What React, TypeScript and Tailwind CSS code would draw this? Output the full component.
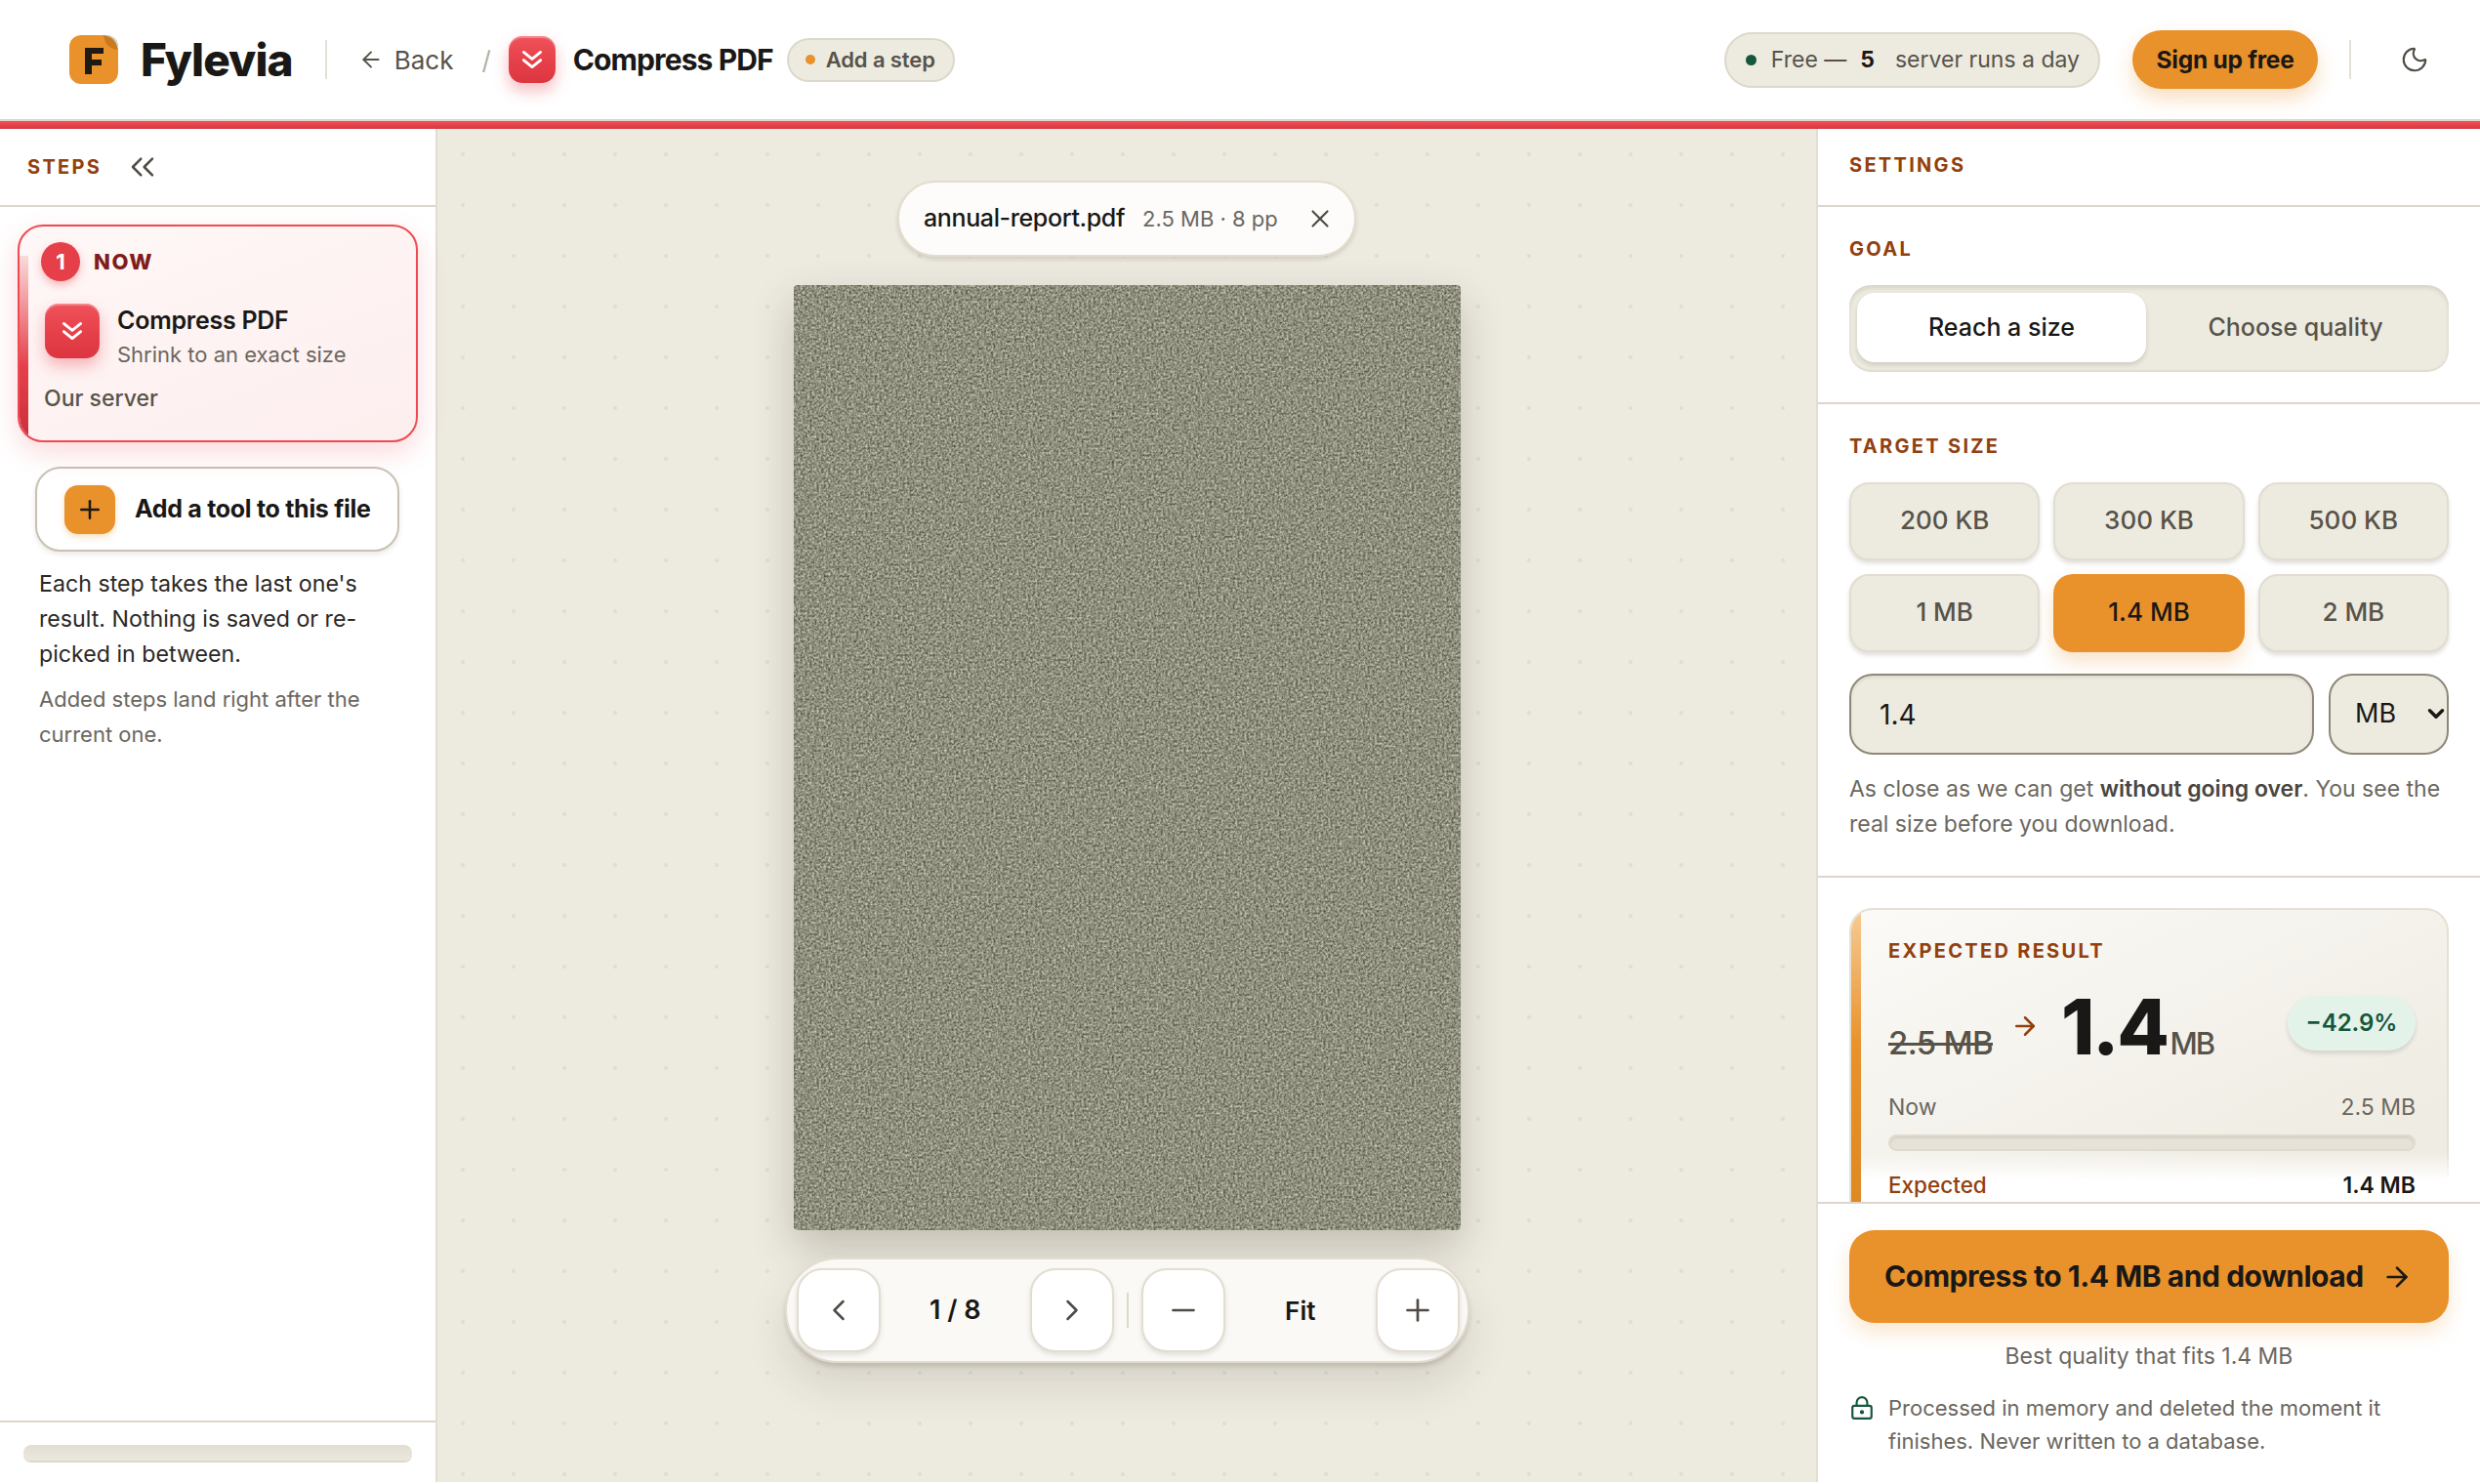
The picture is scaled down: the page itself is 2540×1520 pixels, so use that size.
import {
  ArrowLeft,
  ArrowRight,
  ChevronDown,
  ChevronLeft,
  ChevronRight,
  ChevronsLeft,
  LockKeyhole,
  Minus,
  Moon,
  Plus,
  X,
} from "lucide-react";

const SIZES = ["200 KB", "300 KB", "500 KB", "1 MB", "1.4 MB", "2 MB"];

function Label({ children }: { children: React.ReactNode }) {
  return <div className="text-[20px] leading-[24px] font-bold tracking-[0.115em] text-[#92400e]">{children}</div>;
}

function DoubleChevron({ size }: { size: number }) {
  return (
    <svg width={size} height={size} viewBox="0 0 24 24" fill="none" stroke="white" strokeWidth="2.6" strokeLinecap="round" strokeLinejoin="round">
      <path d="M4 5l8 6.5L20 5" />
      <path d="M4 12.5l8 6.5 8-6.5" />
    </svg>
  );
}

function RedIcon({ w, h, icon }: { w: string; h: string; icon: number }) {
  return (
    <div className={`${w} ${h} shrink-0 rounded-[14px] flex items-center justify-center bg-[linear-gradient(180deg,#f0525a_0%,#e5404a_55%,#dd3540_100%)] shadow-[0_8px_16px_rgba(229,64,74,0.35),inset_0_2px_1px_rgba(255,255,255,0.3)]`}>
      <DoubleChevron size={icon} />
    </div>
  );
}

function ToolButton({ children }: { children: React.ReactNode }) {
  return (
    <button className="w-[86px] h-[86px] shrink-0 rounded-[26px] bg-white border-2 border-[#e2ddcf] shadow-[0_3px_5px_rgba(60,50,30,0.12)] flex items-center justify-center text-[#4f4b44]">
      {children}
    </button>
  );
}

function Header() {
  return (
    <header className="h-[124px] shrink-0 bg-white border-b-2 border-[#ddd6c9] flex items-center pl-[71px] pr-[52px]">
      <div className="relative w-[50px] h-[50px] shrink-0 rounded-[12px] bg-[#e9912a] overflow-hidden flex items-center justify-center">
        <svg width="50" height="50" viewBox="0 0 50 50" className="absolute inset-0">
          <path d="M35 0h15v15z" fill="#cfd2cc" />
          <path d="M35 0c1 9 6 14 15 15-1-2-1-4-2-6-2-5-6-8-13-9z" fill="#c97a1e" />
          <path d="M16 13h19v6H23v6h10v6H23v9h-7z" fill="#1f1a14" />
        </svg>
      </div>
      <div className="ml-[23px] text-[46px] leading-none font-extrabold tracking-[-0.02em] text-[#1a1816]">Fylevia</div>
      <div className="ml-[33px] w-[2px] h-[40px] bg-[#e5e0d5]" />
      <ArrowLeft size={26} strokeWidth={1.8} className="ml-[32px] text-[#57534a]" />
      <span className="ml-[11px] text-[26px] text-[#57534a]">Back</span>
      <span className="ml-[29px] text-[26px] text-[#b5b0a3]">/</span>
      <div className="ml-[18px]">
        <RedIcon w="w-[48px]" h="h-[48px]" icon={26} />
      </div>
      <span className="ml-[18px] text-[30px] font-bold tracking-[-0.03em] text-[#1a1816]">Compress PDF</span>
      <div className="ml-[14px] h-[45px] rounded-full bg-[#edeae0] border-2 border-[#ddd8ca] flex items-center pl-[17px] pr-[18px] gap-[11px]">
        <span className="w-[10px] h-[10px] rounded-full bg-[#e9912a]" />
        <span className="text-[22px] font-semibold tracking-[-0.005em] text-[#57534a]">Add a step</span>
      </div>
      <div className="ml-auto h-[57px] rounded-full bg-[#edeae0] border-2 border-[#ddd8ca] flex items-center pl-[20px] pr-[19px]">
        <span className="w-[11px] h-[11px] rounded-full bg-[#14573c]" />
        <span className="ml-[15px] text-[23px] text-[#57534a]">Free —</span>
        <span className="ml-[14px] text-[23px] font-bold text-[#1a1816]">5</span>
        <span className="ml-[21px] text-[23px] text-[#57534a]">server runs a day</span>
      </div>
      <button className="ml-[33px] w-[190px] h-[60px] rounded-full bg-[#e9912a] text-[24.5px] font-bold tracking-[-0.01em] text-[#1a1816] shadow-[0_10px_20px_rgba(233,145,42,0.3)]">
        Sign up free
      </button>
      <div className="ml-[32px] w-[2px] h-[40px] bg-[#e5e0d5]" />
      <Moon size={30} strokeWidth={1.7} className="ml-[50px] text-[#4f4b44]" />
    </header>
  );
}

function StepsPanel() {
  return (
    <aside className="w-[448px] shrink-0 bg-white border-r-2 border-[#e2ddcf] flex flex-col">
      <div className="h-[80px] shrink-0 border-b-2 border-[#ddd6c9] flex items-center pl-[28px]">
        <Label>STEPS</Label>
        <ChevronsLeft size={40} strokeWidth={1.5} className="ml-[22px] text-[#4f4b44]" />
      </div>
      <div className="flex-1 px-[18px] pt-[18px]">
        <div className="relative h-[223px] rounded-[26px] border-2 border-[#ef4a52] bg-[linear-gradient(160deg,#fff7f7,#fdeeee)] overflow-hidden shadow-[0_10px_28px_rgba(229,64,74,0.2)]">
          <div className="absolute left-0 top-[30px] bottom-0 w-[9px] bg-[linear-gradient(180deg,#fbdada_0%,#e5404a_60%,#c9303a_100%)]" />
          <div className="pl-[22px] pt-[16px]">
            <div className="flex items-center">
              <div className="w-[40px] h-[40px] rounded-full bg-[#e5404a] text-white text-[22px] font-bold flex items-center justify-center shadow-[0_4px_8px_rgba(229,64,74,0.35)]">1</div>
              <span className="ml-[14px] text-[22px] font-extrabold tracking-[0.07em] text-[#7f1d1d]">NOW</span>
            </div>
            <div className="flex mt-[23px] pl-[4px]">
              <RedIcon w="w-[56px]" h="h-[56px]" icon={26} />
              <div className="ml-[18px]">
                <div className="text-[25px] leading-[35px] font-semibold tracking-[-0.01em] text-[#1a1816]">Compress PDF</div>
                <div className="text-[22px] leading-[35px] text-[#6b675f]">Shrink to an exact size</div>
              </div>
            </div>
            <div className="mt-[10px] pl-[3px] text-[23px] leading-[34px] font-medium text-[#57534a]">Our server</div>
          </div>
        </div>
        <button className="mt-[25px] ml-[18px] w-[373px] h-[87px] rounded-[26px] bg-white border-2 border-[#c9c2b2] shadow-[0_3px_5px_rgba(60,50,30,0.1)] flex items-center pl-[28px]">
          <span className="w-[52px] h-[50px] rounded-[14px] bg-[#e9912a] flex items-center justify-center text-[#1a1816] shadow-[0_3px_6px_rgba(233,145,42,0.3)]">
            <Plus size={30} strokeWidth={2} />
          </span>
          <span className="ml-[20px] text-[25px] font-bold tracking-[-0.012em] text-[#1a1816]">Add a tool to this file</span>
        </button>
        <p className="mt-[15px] ml-[22px] w-[350px] text-[23.2px] leading-[36px] text-[#2b2825]">
          Each step takes the last one's result. Nothing is saved or re-picked in between.
        </p>
        <p className="mt-[10px] ml-[22px] w-[350px] text-[22px] leading-[36px] text-[#6b675f]">
          Added steps land right after the current one.
        </p>
      </div>
      <div className="h-[63px] shrink-0 border-t-2 border-[#ddd6c9] px-[24px] pt-[23px]">
        <div className="h-[16px] rounded-full bg-[linear-gradient(180deg,#e2ddd1,#ece8de)] shadow-[0_2px_0_#ddd8cc]" />
      </div>
    </aside>
  );
}

function Viewer() {
  return (
    <main className="flex-1 min-w-0 bg-[#edeae0] bg-[radial-gradient(circle,#e0ddd1_1.5px,transparent_2.5px)] bg-[length:52px_52px] flex flex-col items-center">
      <div className="mt-[53px] h-[78px] w-[470px] rounded-full bg-[#fdfcfa] border-2 border-[#e2ddcf] shadow-[0_3px_4px_rgba(60,50,30,0.14)] flex items-center pl-[25px]">
        <span className="text-[25px] font-medium tracking-[-0.015em] text-[#1a1816]">annual-report.pdf</span>
        <span className="ml-[18px] text-[22px] text-[#6b675f]">2.5 MB · 8 pp</span>
        <X size={30} strokeWidth={1.7} className="ml-[28px] text-[#4f4b44]" />
      </div>
      <div className="mt-[29px] w-[683px] h-[968px] shrink-0 rounded-[4px] overflow-hidden shadow-[0_18px_44px_rgba(60,50,30,0.24)]">
        <svg width="683" height="968" className="block">
          <filter id="paper-noise" x="0" y="0" width="100%" height="100%" colorInterpolationFilters="sRGB">
            <feTurbulence type="fractalNoise" baseFrequency="0.42" numOctaves="3" seed="4" />
            <feColorMatrix type="matrix" values="0.68 0 0 0 0.215  0.68 0 0 0 0.22  0.68 0 0 0 0.145  0 0 0 0 1" />
          </filter>
          <rect width="683" height="968" filter="url(#paper-noise)" />
        </svg>
      </div>
      <div className="mt-[28px] h-[108px] w-[701px] rounded-full bg-[#fbf9f6] border-2 border-[#e2ddcf] shadow-[0_4px_4px_rgba(60,50,30,0.16),0_24px_44px_rgba(60,50,30,0.12)] flex items-center pl-[10px] pr-[8px]">
        <ToolButton><ChevronLeft size={36} strokeWidth={1.7} /></ToolButton>
        <span className="flex-1 text-center text-[27px] font-semibold text-[#1a1816]">1 / 8</span>
        <ToolButton><ChevronRight size={36} strokeWidth={1.7} /></ToolButton>
        <div className="mx-[13px] w-[2px] h-[36px] bg-[#ddd8ca]" />
        <ToolButton><Minus size={36} strokeWidth={1.8} /></ToolButton>
        <span className="flex-1 text-center text-[26px] font-semibold text-[#1a1816]">Fit</span>
        <ToolButton><Plus size={36} strokeWidth={1.8} /></ToolButton>
      </div>
    </main>
  );
}

function SettingsPanel() {
  return (
    <aside className="w-[680px] shrink-0 bg-white border-l-2 border-[#e2ddcf] flex flex-col">
      <div className="h-[80px] shrink-0 border-b-2 border-[#ddd6c9] flex items-center px-[32px] pb-[4px]">
        <Label>SETTINGS</Label>
      </div>
      <div className="relative flex-1 min-h-0 overflow-hidden">
        <section className="px-[32px] pt-[31px] pb-[33px] border-b-2 border-[#ddd6c9]">
          <Label>GOAL</Label>
          <div className="mt-[25px] h-[87px] p-[8px] rounded-[22px] bg-[#edeae0] shadow-[inset_0_3px_4px_rgba(80,70,50,0.14),0_2px_0_#e2ddd1] grid grid-cols-[296px_1fr]">
            <button className="rounded-[18px] bg-white text-[25px] font-medium text-[#1a1816] shadow-[0_3px_5px_rgba(60,50,30,0.16)]">Reach a size</button>
            <button className="pl-[4px] text-[25px] font-medium text-[#57534a]">Choose quality</button>
          </div>
        </section>
        <section className="px-[32px] pt-[31px] pb-[35px] border-b-2 border-[#ddd6c9]">
          <Label>TARGET SIZE</Label>
          <div className="mt-[25px] grid grid-cols-3 gap-x-[14px] gap-y-[14px]">
            {SIZES.map((s) =>
              s === "1.4 MB" ? (
                <button key={s} className="h-[80px] pb-[3px] rounded-[20px] bg-[#e9912a] text-[26px] font-medium text-[#1a1816] shadow-[0_10px_18px_rgba(233,145,42,0.25)]">{s}</button>
              ) : (
                <button key={s} className="h-[80px] pb-[3px] rounded-[20px] bg-[#edeae0] border-2 border-[#e2ddd1] text-[26px] font-medium text-[#57534a] shadow-[0_3px_4px_rgba(60,50,30,0.16)]">{s}</button>
              ),
            )}
          </div>
          <div className="mt-[22px] flex gap-[15px]">
            <input
              defaultValue="1.4"
              className="flex-1 min-w-0 h-[83px] rounded-[24px] bg-[#edeae0] border-2 border-[#8f8878] pl-[29px] text-[28px] text-[#1a1816] shadow-[inset_0_2px_3px_rgba(80,70,50,0.1)] outline-none"
            />
            <div className="relative w-[123px] h-[83px]">
              <select className="w-full h-full appearance-none rounded-[24px] bg-[#edeae0] border-2 border-[#8f8878] pl-[25px] text-[27px] text-[#1a1816] outline-none" defaultValue="MB">
                <option>MB</option>
                <option>KB</option>
              </select>
              <ChevronDown size={26} strokeWidth={3.2} className="absolute right-0 top-[28px] text-[#1a1816] pointer-events-none" />
            </div>
          </div>
          <p className="mt-[17px] text-[23px] leading-[36px] text-[#6b675f]">
            As close as we can get <strong className="font-semibold text-[#4a463f]">without going over</strong>. You see the real size before you download.
          </p>
        </section>
        <section className="px-[32px] pt-[31px]">
          <div className="relative h-[400px] rounded-[24px] border-2 border-[#e5e0d5] bg-[linear-gradient(155deg,#fbfaf7_0%,#efece3_70%)] overflow-hidden pl-[38px] pr-[32px] pt-[30px]">
            <div className="absolute left-0 top-0 bottom-0 w-[10px] bg-[linear-gradient(180deg,#f5cb96_0%,#e9912a_35%,#d98420_100%)]" />
            <div className="text-[20px] leading-[24px] font-bold tracking-[0.115em] text-[#92400e]">EXPECTED RESULT</div>
            <div className="mt-[28px] h-[76px] flex items-start justify-between">
              <div className="flex items-baseline">
                <span className="text-[33px] font-medium tracking-[-0.02em] line-through text-[#57534a]">2.5 MB</span>
                <ArrowRight size={30} strokeWidth={2} className="self-start ml-[18px] mt-[22px] text-[#92400e]" />
                <span className="ml-[22px] text-[78px] leading-[76px] font-extrabold tracking-[-0.03em] text-[#1a1816]">1.4</span>
                <span className="ml-[3px] text-[31px] font-medium tracking-[-0.07em] text-[#57534a]">MB</span>
              </div>
              <div className="mt-[6px] w-[131px] h-[56px] rounded-full bg-[#e4f3ea] flex items-center justify-center text-[24px] font-semibold text-[#14573c] shadow-[0_3px_4px_rgba(60,50,30,0.15)]">−42.9%</div>
            </div>
            <div className="mt-[30px] flex justify-between text-[23px] leading-[28px] text-[#6b675f]">
              <span>Now</span>
              <span>2.5 MB</span>
            </div>
            <div className="mt-[14px] h-[17px] rounded-full bg-[#e6e2d7] border-2 border-[#e0dacd] shadow-[inset_0_2px_2px_rgba(80,70,50,0.1)]" />
            <div className="relative z-20 mt-[21px] flex justify-between text-[23px] leading-[28px] font-medium">
              <span className="text-[22.5px] text-[#92400e]">Expected</span>
              <span className="font-semibold text-[#1a1816]">1.4 MB</span>
            </div>
          </div>
        </section>
        <div className="absolute z-10 left-[44px] right-0 bottom-0 h-[50px] bg-[linear-gradient(180deg,rgba(255,255,255,0)_0%,#ffffff_55%)]" />
      </div>
      <div className="shrink-0 h-[287px] bg-white border-t-2 border-[#ddd6c9] px-[32px] pt-[27px] relative z-30">
        <button className="w-full h-[95px] rounded-[26px] bg-[#e9912a] flex items-center pl-[36px] text-[30px] font-bold tracking-[-0.015em] text-[#1a1816] shadow-[0_10px_20px_rgba(233,145,42,0.22)]">
          Compress to 1.4 MB and download
          <ArrowRight size={32} strokeWidth={2} className="ml-[18px]" />
        </button>
        <div className="mt-[17px] text-center text-[23px] leading-[34px] text-[#6b675f]">Best quality that fits 1.4 MB</div>
        <div className="mt-[19px] flex items-start">
          <LockKeyhole size={26} strokeWidth={2} className="shrink-0 mt-[4px] text-[#14573c]" />
          <p className="ml-[14px] text-[22px] leading-[34px] text-[#6b675f]">
            Processed in memory and deleted the moment it finishes. Never written to a database.
          </p>
        </div>
      </div>
    </aside>
  );
}

export default function App() {
  return (
    <div className="h-[1518px] flex flex-col font-[Inter,sans-serif] overflow-hidden">
      <Header />
      <div className="h-[8px] shrink-0 bg-[linear-gradient(180deg,#f0525a,#d8353f)]" />
      <div className="flex-1 min-h-0 flex">
        <StepsPanel />
        <Viewer />
        <SettingsPanel />
      </div>
    </div>
  );
}
